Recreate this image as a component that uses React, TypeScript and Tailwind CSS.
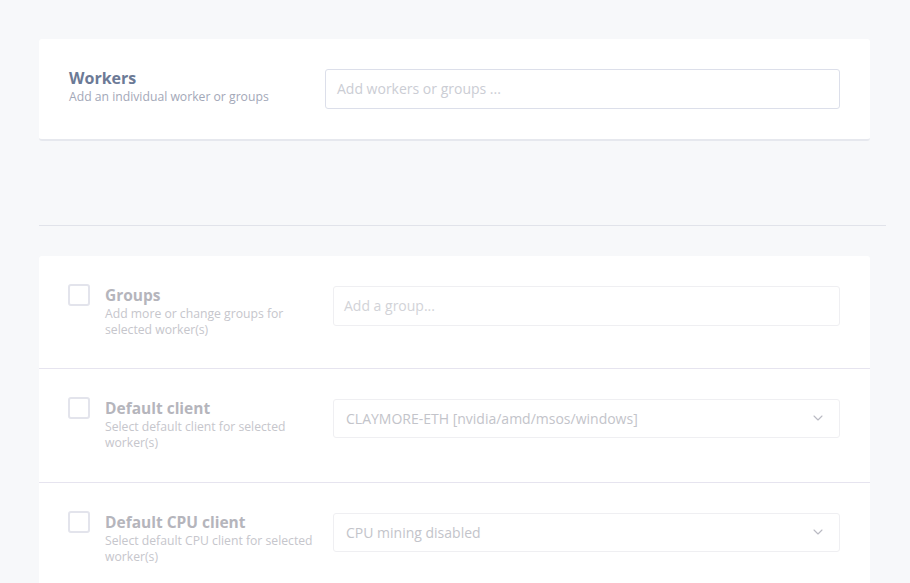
import { ChevronDown } from 'lucide-react';

function Checkbox() {
  return <div className="h-[22px] w-[22px] shrink-0 rounded-[3px] border-2 border-[#e3e4ec] bg-white" />;
}

function Row({ title, sub, children, last, tall }: { title: string; sub: string; children: React.ReactNode; last?: boolean; tall?: boolean }) {
  return (
    <div className={`flex items-start px-[29px] pt-[28px] ${tall ? 'h-[114px]' : 'h-[113px]'} ${last ? '' : 'border-b border-[#e6e4ef]'}`}>
      <Checkbox />
      <div className="ml-[15px] w-[215px] shrink-0 pt-[1px]">
        <div className="text-[15.5px] font-bold leading-[20px] text-[#b5b5bc]">{title}</div>
        <div className="mt-[1px] text-[12.2px] leading-[16px] text-[#c6c6cc]">{sub}</div>
      </div>
      <div className="ml-[13px] mr-px mt-[2px] flex-1">{children}</div>
    </div>
  );
}

function Select({ value }: { value: string }) {
  return (
    <div className="flex h-[39px] items-center justify-between rounded-[3px] border border-[#efeff2] bg-white pb-px pl-[12px] pr-[13px]">
      <span className="text-[14px] text-[#c3c4ca]">{value}</span>
      <ChevronDown className="h-[16px] w-[16px] text-[#b9bac2]" strokeWidth={1.6} />
    </div>
  );
}

export default function App() {
  return (
    <div className="min-h-[583px] bg-[#f7f8fa] pt-[39px] pl-[39px]" style={{ fontFamily: '"Open Sans", sans-serif' }}>
      <div className="w-[831px] rounded-[3px] border-b-2 border-[#e6e8ee] bg-white">
        <div className="flex h-[100px] items-start px-[30px] pt-[30px]">
          <div className="w-[256px] shrink-0">
            <div className="text-[16px] font-bold leading-[19px] text-[#6c7a96]">Workers</div>
            <div className="mt-[1px] text-[12.2px] leading-[16px] text-[#a3a8b8]">Add an individual worker or groups</div>
          </div>
          <div className="flex h-[40px] flex-1 items-center rounded-[3px] border border-[#dcdfea] px-[11px] pb-[2px] text-[14px] text-[#cbcdd4]">
            Add workers or groups ...
          </div>
        </div>
      </div>
      <div className="mt-[84px] h-px w-[847px] bg-[#e1e3ea]" />
      <div className="mt-[30px] w-[831px] rounded-t-[3px] bg-white">
        <Row title="Groups" sub="Add more or change groups for selected worker(s)">
          <div className="flex h-[40px] items-center rounded-[3px] border border-[#efeff2] px-[10px] pb-px text-[14px] text-[#d2d3d8]">
            Add a group...
          </div>
        </Row>
        <Row title="Default client" sub="Select default client for selected worker(s)" tall>
          <Select value="CLAYMORE-ETH [nvidia/amd/msos/windows]" />
        </Row>
        <Row title="Default CPU client" sub="Select default CPU client for selected worker(s)" last>
          <Select value="CPU mining disabled" />
        </Row>
      </div>
    </div>
  );
}
